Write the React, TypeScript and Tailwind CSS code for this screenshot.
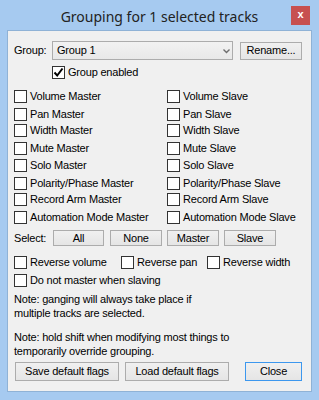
import React from "react";

const rows = [
  { left: "Volume Master", right: "Volume Slave", h: "h-[18px]" },
  { left: "Pan Master", right: "Pan Slave", h: "h-[16px]" },
  { left: "Width Master", right: "Width Slave", h: "h-[18px]" },
  { left: "Mute Master", right: "Mute Slave", h: "h-[17px]" },
  { left: "Solo Master", right: "Solo Slave", h: "h-[18px]" },
  { left: "Polarity/Phase Master", right: "Polarity/Phase Slave", h: "h-[16px]" },
  { left: "Record Arm Master", right: "Record Arm Slave", h: "h-[18px]" },
  { left: "Automation Mode Master", right: "Automation Mode Slave", h: "h-[13px]" },
];

function Box({ checked = false }: { checked?: boolean }) {
  return (
    <span className="w-[13px] h-[13px] shrink-0 border border-[#333333] bg-white flex items-center justify-center">
      {checked && (
        <svg width="11" height="11" viewBox="0 0 11 11">
          <path d="M1.5 5.5 L4.2 8.5 L9.5 1.5" fill="none" stroke="#000" strokeWidth="2" />
        </svg>
      )}
    </span>
  );
}

function Check({ label, checked = false, className = "" }: { label: string; checked?: boolean; className?: string }) {
  return (
    <div className={`flex items-center h-[13px] ${className}`}>
      <Box checked={checked} />
      <span className="ml-[3px] whitespace-nowrap leading-[13px]">{label}</span>
    </div>
  );
}

function Btn({ label, className = "" }: { label: string; className?: string }) {
  return (
    <div
      className={`flex items-center justify-center border bg-gradient-to-b from-[#f0f0f0] to-[#e5e5e5] whitespace-nowrap ${className}`}
    >
      {label}
    </div>
  );
}

export default function App() {
  return (
    <div
      className="w-[319px] h-[400px] bg-[#a6caf0] flex flex-col text-[11px] tracking-[-0.2px] text-black"
      style={{ fontFamily: '"Liberation Sans", Arial, sans-serif' }}
    >
      {/* Title bar */}
      <div className="relative h-[30px] shrink-0 flex items-center justify-center">
        <span
          className="text-[14px] tracking-normal text-[#222] mt-[2px]"
          style={{ fontFamily: '"Noto Sans", "Open Sans", sans-serif' }}
        >
          Grouping for 1 selected tracks
        </span>
        <div className="absolute left-[291px] top-[6px] w-[19px] h-[19px] bg-[#c75050] flex items-center justify-center text-white text-[11px] font-bold leading-none pb-[2px]">
          x
        </div>
      </div>

      {/* Client area */}
      <div className="mx-[7px] h-[362px] border border-[#8fb2d6] bg-[#f0f0f0] pl-[6px]">
        <div className="flex items-center mt-[10px] h-[19px]">
          <span className="w-[38px]">Group:</span>
          <div className="relative w-[181px] h-[19px] border border-[#acacac] bg-gradient-to-b from-[#f2f2f2] to-[#e8e8e8] flex items-center pl-[4px]">
            Group 1
            <svg className="absolute right-[2px] top-[7px]" width="7" height="5" viewBox="0 0 7 5">
              <path d="M0.5 0.5 L3.5 3.5 L6.5 0.5" fill="none" stroke="#6d6d6d" strokeWidth="1.4" />
            </svg>
          </div>
          <Btn label="Rename..." className="ml-[7px] w-[62px] h-[18px] border-[#acacac]" />
        </div>

        <Check label="Group enabled" checked className="mt-[6px] ml-[38px]" />

        <div className="mt-[11px] flex flex-col">
          {rows.map((r) => (
            <div key={r.left} className={`flex items-start ${r.h}`}>
              <Check label={r.left} className="w-[153px]" />
              <Check label={r.right} />
            </div>
          ))}
        </div>

        <div className="flex items-center mt-[6px] h-[16px]">
          <span className="w-[39px]">Select:</span>
          <Btn label="All" className="w-[51px] h-[16px] border-[#acacac]" />
          <Btn label="None" className="ml-[6px] w-[52px] h-[16px] border-[#acacac]" />
          <Btn label="Master" className="ml-[5px] w-[52px] h-[16px] border-[#acacac]" />
          <Btn label="Slave" className="ml-[5px] w-[52px] h-[16px] border-[#acacac]" />
        </div>

        <div className="flex mt-[10px]">
          <Check label="Reverse volume" className="w-[107px]" />
          <Check label="Reverse pan" className="w-[86px]" />
          <Check label="Reverse width" />
        </div>
        <Check label="Do not master when slaving" className="mt-[5px]" />

        <p className="mt-[5px] leading-[14px]">
          Note: ganging will always take place if
          <br />
          multiple tracks are selected.
        </p>
        <p className="mt-[10px] leading-[14px]">
          Note: hold shift when modifying most things to
          <br />
          temporarily override grouping.
        </p>

        <div className="flex mt-[4px]">
          <Btn label="Save default flags" className="ml-[1px] w-[104px] h-[19px] border-[#acacac]" />
          <Btn label="Load default flags" className="ml-[6px] w-[104px] h-[19px] border-[#acacac]" />
          <Btn label="Close" className="ml-[16px] w-[57px] h-[19px] border-[#3c97ee]" />
        </div>
      </div>
    </div>
  );
}
